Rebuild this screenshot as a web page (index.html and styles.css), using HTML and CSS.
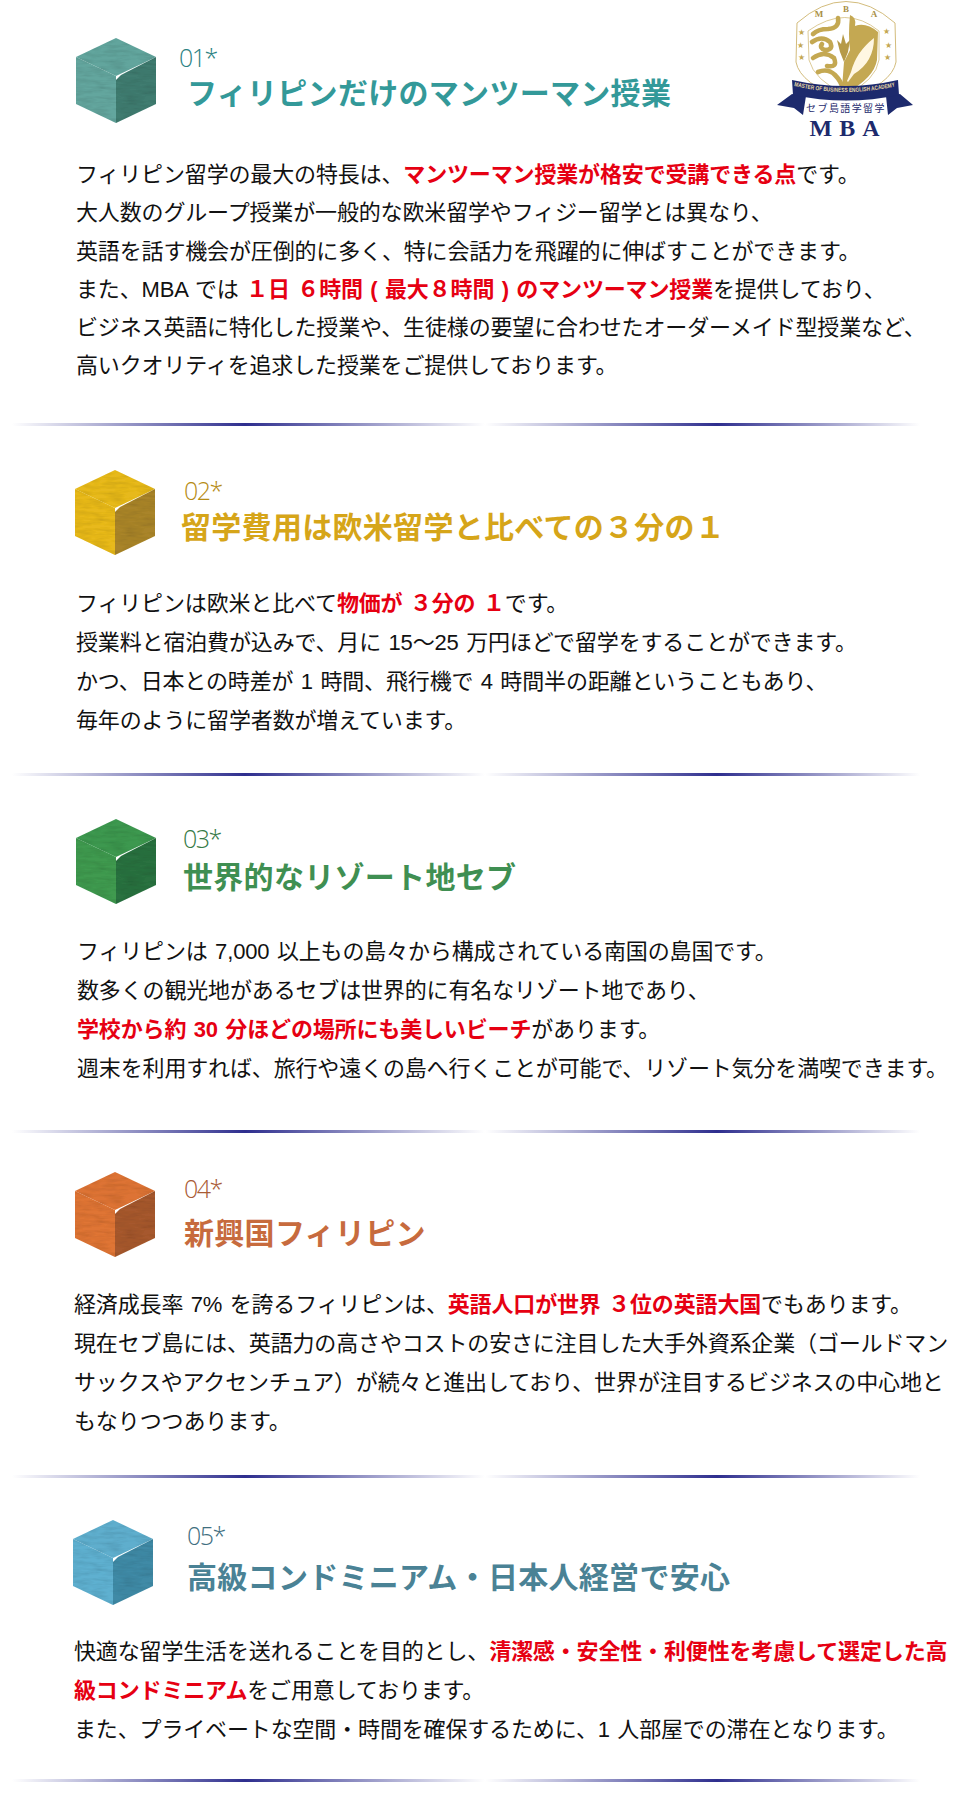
FILE: index.html
```html
<!DOCTYPE html>
<html lang="ja">
<head>
<meta charset="UTF-8"/>
<meta name="viewport" content="width=device-width,initial-scale=1.0"/>
<title>フィリピン留学の特長</title>
<link rel="stylesheet" href="styles.css">
</head>
<body>

<svg class="defs" width="0" height="0" aria-hidden="true">
  <defs>
    <filter id="wood" x="-2%" y="-2%" width="104%" height="104%">
      <feTurbulence type="fractalNoise" baseFrequency="0.06 0.3" numOctaves="3" seed="4" result="n"/>
      <feColorMatrix in="n" type="matrix" values="0 0 0 0 0  0 0 0 0 0  0 0 0 0 0  0.4 0 0 0 -0.15" result="grain"/>
      <feComposite in="grain" in2="SourceGraphic" operator="in" result="clip"/>
      <feMerge result="m"><feMergeNode in="SourceGraphic"/><feMergeNode in="clip"/></feMerge>
      <feGaussianBlur in="m" stdDeviation="0.35"/>
    </filter>
    <symbol id="cube" viewBox="0 0 82 87">
      <g filter="url(#wood)">
        <polygon class="face-left" points="1,20 41,39 41,86 1,67"/>
        <polygon class="face-top" points="41,1 81,20 41,39 1,20"/>
        <polygon class="face-right" points="81,20 81,67 41,86 41,43 46,38"/>
      </g>
    </symbol>
  </defs>
</svg>

<section class="item item-1">
  <div class="head">
    <svg class="cube"><use href="#cube"/></svg>
    <div class="titles">
      <div class="num">01*</div>
      <h2>フィリピンだけのマンツーマン授業</h2>
    </div>
    <svg class="logo" viewBox="0 0 180 150">
      <path d="M47 23 Q96 -20 145 23 L146 62 Q142 84 96 100 Q50 84 46 62 Z" fill="#fff" stroke="#d3bc7c" stroke-width="1"/>
      <path d="M58 31 Q96 4 129 31 L129 60 Q126 80 96 95 Q64 80 59 60 Z" fill="#fff" stroke="#d3bc7c" stroke-width=".8"/>
      <path d="M100 15 Q107 18 105 26 Q116 22 128 32 L127 60 Q124 78 96 93 L92 88 L94 62 L100 50 Q98 36 100 15 Z" fill="#c4a852"/>
      <g fill="none" stroke="#c4a852" stroke-width="4.6" stroke-linecap="round">
        <path d="M88 18 Q90 28 78 29 Q68 29 63 34"/>
        <path d="M62 42 Q72 35 80 42 Q84 50 75 50 Q69 48 72 44"/>
        <path d="M63 58 Q74 50 84 58 Q88 68 77 66"/>
        <path d="M68 72 Q78 68 85 75 Q91 81 93 89"/>
      </g>
      <path d="M93 34 L96 44 L100 40 L98 52 L94 62 L90 52 L87 40 L91 44 Z" fill="#b69a48"/>
      <path d="M124 38 Q124 62 104 74 L98 82 L97 81 L101 72 Q106 52 124 38 Z" fill="#fff7e2"/>
      <text class="logo-ring" x="69" y="17">M</text>
      <text class="logo-ring" x="96" y="12">B</text>
      <text class="logo-ring" x="124" y="17">A</text>
      <text class="logo-star" x="48" y="35">★</text>
      <text class="logo-star" x="47" y="48">★</text>
      <text class="logo-star" x="48" y="60">★</text>
      <text class="logo-star" x="133" y="34">★</text>
      <text class="logo-star" x="135" y="48">★</text>
      <text class="logo-star" x="134" y="60">★</text>
      <path d="M42 94 L27 105 L44 108 L53 115 L56 96 Z" fill="#1d2a6d"/>
      <path d="M150 94 L163 105 L147 108 L138 115 L136 96 Z" fill="#1d2a6d"/>
      <path d="M42 80 Q96 92 148 80 L149 95 Q96 106 43 95 Z" fill="#1d2a6d"/>
      <path id="ribbon-arc" d="M44 86 Q96 98 147 86" fill="none"/>
      <text class="logo-ribbon"><textPath href="#ribbon-arc" textLength="102" lengthAdjust="spacingAndGlyphs">MASTER OF BUSINESS ENGLISH ACADEMY</textPath></text>
      <text class="logo-ja" x="96" y="112">セブ島語学留学</text>
      <text class="logo-mba" x="98" y="136">MBA</text>
    </svg>
  </div>
  <p>フィリピン留学の最大の特長は、<b>マンツーマン授業が格安で受講できる点</b>です。<br>
  大人数のグループ授業が一般的な欧米留学やフィジー留学とは異なり、<br>
  英語を話す機会が圧倒的に多く、特に会話力を飛躍的に伸ばすことができます。<br>
  また、MBA では <b>１日 ６時間 ( 最大８時間 ) のマンツーマン授業</b>を提供しており、<br>
  ビジネス英語に特化した授業や、生徒様の要望に合わせたオーダーメイド型授業など、<br>
  高いクオリティを追求した授業をご提供しております。</p>
  <div class="rule"></div>
</section>

<section class="item item-2">
  <div class="head">
    <svg class="cube"><use href="#cube"/></svg>
    <div class="titles">
      <div class="num">02*</div>
      <h2>留学費用は欧米留学と比べての３分の１</h2>
    </div>
  </div>
  <p>フィリピンは欧米と比べて<b>物価が ３分の １</b>です。<br>
  授業料と宿泊費が込みで、月に 15～25 万円ほどで留学をすることができます。<br>
  かつ、日本との時差が 1 時間、飛行機で 4 時間半の距離ということもあり、<br>
  毎年のように留学者数が増えています。</p>
  <div class="rule"></div>
</section>

<section class="item item-3">
  <div class="head">
    <svg class="cube"><use href="#cube"/></svg>
    <div class="titles">
      <div class="num">03*</div>
      <h2>世界的なリゾート地セブ</h2>
    </div>
  </div>
  <p>フィリピンは 7,000 以上もの島々から構成されている南国の島国です。<br>
  数多くの観光地があるセブは世界的に有名なリゾート地であり、<br>
  <b>学校から約 30 分ほどの場所にも美しいビーチ</b>があります。<br>
  週末を利用すれば、旅行や遠くの島へ行くことが可能で、リゾート気分を満喫できます。</p>
  <div class="rule"></div>
</section>

<section class="item item-4">
  <div class="head">
    <svg class="cube"><use href="#cube"/></svg>
    <div class="titles">
      <div class="num">04*</div>
      <h2>新興国フィリピン</h2>
    </div>
  </div>
  <p>経済成長率 7% を誇るフィリピンは、<b>英語人口が世界 ３位の英語大国</b>でもあります。<br>
  現在セブ島には、英語力の高さやコストの安さに注目した大手外資系企業（ゴールドマン<br>
  サックスやアクセンチュア）が続々と進出しており、世界が注目するビジネスの中心地と<br>
  もなりつつあります。</p>
  <div class="rule"></div>
</section>

<section class="item item-5">
  <div class="head">
    <svg class="cube"><use href="#cube"/></svg>
    <div class="titles">
      <div class="num">05*</div>
      <h2>高級コンドミニアム・日本人経営で安心</h2>
    </div>
  </div>
  <p>快適な留学生活を送れることを目的とし、<b>清潔感・安全性・利便性を考慮して選定した高<br>
  級コンドミニアム</b>をご用意しております。<br>
  また、プライベートな空間・時間を確保するために、1 人部屋での滞在となります。</p>
  <div class="rule"></div>
</section>

</body>
</html>
```

FILE: styles.css
```css
body { margin:0; background:#fff; color:#111; font-family:"Liberation Sans","Noto Sans CJK JP",sans-serif; overflow-x:hidden; }
.defs { position:absolute; }

.item { --accent:#339999; --left:#63a69e; --top:#62a59d; --right:#3f7b70; }
.item-2 { --accent:#d6a519; --left:#e8b91c; --top:#e7b91e; --right:#a9842a; }
.item-3 { --accent:#3f8f52; --left:#3f9a50; --top:#3e9850; --right:#2c7140; }
.item-4 { --accent:#c76b3e; --left:#df7435; --top:#dd7336; --right:#a6592f; }
.item-5 { --accent:#4a8295; --left:#5fb0d0; --top:#5eaecd; --right:#3f8aa6; }

.head { display:flex; align-items:flex-start; }
.cube { width:82px; height:87px; flex:none; }
.face-left { fill:var(--left); }
.face-top { fill:var(--top); }
.face-right { fill:var(--right); }
.titles { color:var(--accent); }
.num { font-family:"Open Sans",sans-serif; font-weight:300; font-size:25px; line-height:28px; letter-spacing:-1.5px; color:color-mix(in srgb,var(--accent) 85%,#000); }
h2 { margin:0; font-family:"Noto Sans CJK JP",sans-serif; font-size:30px; font-weight:700; line-height:40px; white-space:nowrap; letter-spacing:.3px; }

p { margin:0; font-size:22px; line-height:39px; white-space:nowrap; letter-spacing:-.15px; word-spacing:1.5px; }
p b { color:#e60012; font-weight:700; }

.rule { height:3px; background:
  linear-gradient(90deg,rgba(40,40,140,0) 12px,#2e2e8e 245px,rgba(40,40,140,0) 485px) ,
  linear-gradient(90deg,rgba(40,40,140,0) 485px,#2e2e8e 717px,rgba(40,40,140,0) 920px); }

.logo { width:180px; height:150px; flex:none; margin-left:auto; margin-right:30px; }
.logo-ring { font:700 9px "Liberation Serif",serif; fill:#a98f45; text-anchor:middle; }
.logo-star { font-size:8px; fill:#c4a852; font-family:"DejaVu Sans",sans-serif; }
.logo-ribbon { font:700 6px "Liberation Sans",sans-serif; fill:#e8d9a4; }
.logo-ja { font-size:10px; fill:#1d2a6d; text-anchor:middle; letter-spacing:1.4px; font-family:"Noto Sans CJK JP",serif; }
.logo-mba { font:700 24px "Liberation Serif",serif; fill:#1d2a6d; text-anchor:middle; letter-spacing:7px; }

.item-1 .head { height:140px; }
.item-1 .cube { margin:37px 22px 0 75px; }
.item-1 .num { margin-top:43px; }
.item-1 h2 { margin:0 0 0 8px; }
.item-1 p { margin:16px 0 0 76px; line-height:38.3px; }
.item-1 .rule { margin-top:37px; }

.item-2 { padding-top:43px; }
.item-2 .cube { margin:0 25px 0 74px; }
.item-2 .num { margin-left:3px; margin-top:7px; }
.item-2 h2 { margin-top:1px; }
.item-2 p { margin:28px 0 0 76px; }
.item-2 .rule { margin-top:33px; }

.item-3 { padding-top:42px; }
.item-3 .cube { margin:0 26px 0 75px; }
.item-3 .num { margin-top:6px; }
.item-3 h2 { margin-top:3px; }
.item-3 p { margin:27px 0 0 77px; }
.item-3 .rule { margin-top:42px; }

.item-4 { padding-top:38px; }
.item-4 .cube { margin:0 28px 0 74px; }
.item-4 .num { margin-top:3px; }
.item-4 h2 { margin-top:9px; }
.item-4 p { margin:27px 0 0 74px; }
.item-4 .rule { margin-top:34px; }

.item-5 { padding-top:41px; }
.item-5 .cube { margin:0 33px 0 72px; }
.item-5 .num { margin-top:2px; }
.item-5 h2 { margin-top:6px; }
.item-5 p { margin:26px 0 0 74px; }
.item-5 .rule { margin-top:30px; }
```
